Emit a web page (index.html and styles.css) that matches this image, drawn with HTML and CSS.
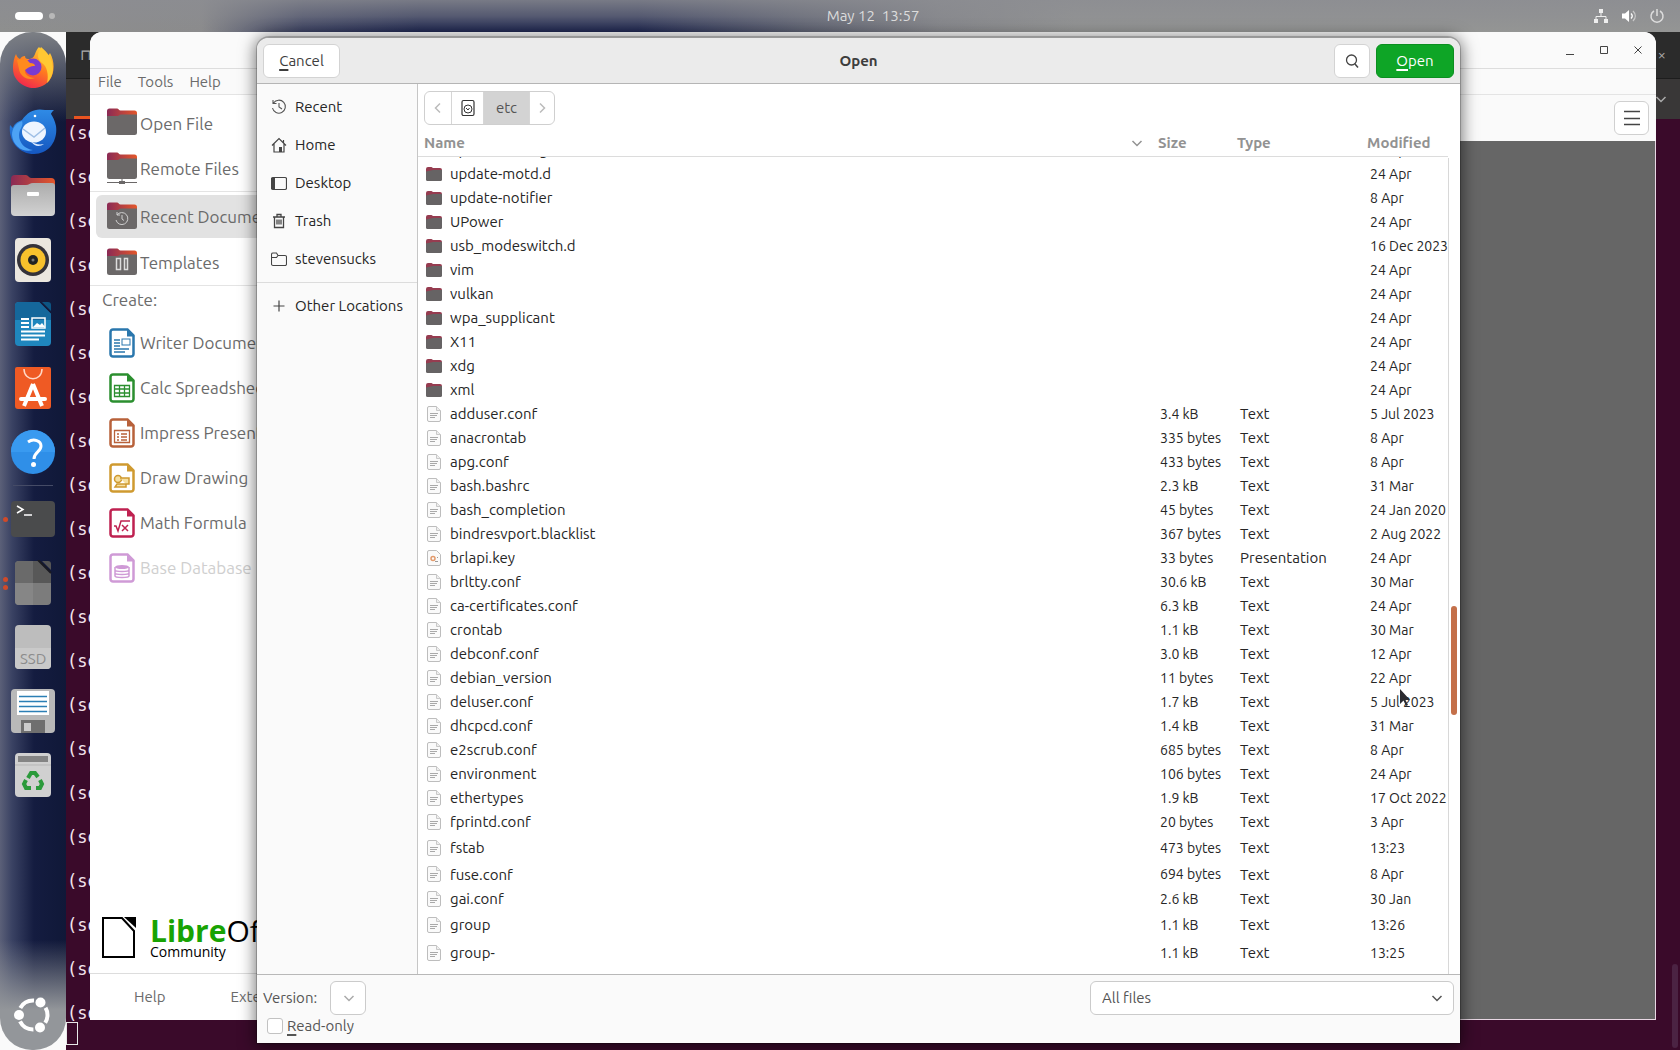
FILE: index.html
```
<!DOCTYPE html>
<html lang="en">
<head>
<meta charset="utf-8">
<title>Open</title>
<link rel="stylesheet" href="styles.css">
</head>
<body>
<svg class="defs" aria-hidden="true">
  <linearGradient id="g-folder" x1="0" x2="1"><stop offset="0" stop-color="#8a2a55"/><stop offset="1" stop-color="#e4572b"/></linearGradient>
  <linearGradient id="g-fox" x1="0.8" y1="0" x2="0.3" y2="1"><stop offset="0" stop-color="#ffd83a"/><stop offset="0.5" stop-color="#ff7a1f"/><stop offset="1" stop-color="#f0254f"/></linearGradient>
  <linearGradient id="g-bird" x1="0" x2="0" y1="0" y2="1"><stop offset="0" stop-color="#2f8be6"/><stop offset="1" stop-color="#1557c0"/></linearGradient>
  <linearGradient id="g-metal" x1="0" x2="0" y1="0" y2="1"><stop offset="0" stop-color="#acacac"/><stop offset="1" stop-color="#d2d2d2"/></linearGradient>
  <symbol id="i-folder" viewBox="0 0 16 16"><path d="M0 3a2 2 0 0 1 2-2h3.500l1.500 1h7a2 2 0 0 1 2 2v4H0z" fill="#963c50"/><path d="M0 5.500l7-1.500h9v9.500a1.500 1.500 0 0 1-1.500 1.500h-13A1.500 1.500 0 0 1 0 13.500z" fill="#666364"/></symbol>
  <symbol id="i-text" viewBox="0 0 16 16"><path d="M3 .5h7.500l4 4V14a1.500 1.500 0 0 1-1.500 1.500H3A1.500 1.500 0 0 1 1.500 14V2A1.500 1.500 0 0 1 3 .5z" fill="#fafafa" stroke="#bdbdbd"/><path d="M10.500 .5v4h4" fill="#eee" stroke="#c9c9c9"/><path d="M4 7.500h8M4 9.500h7M4 11.500h5" stroke="#a9a9a9" fill="none"/></symbol>
  <symbol id="i-pres" viewBox="0 0 16 16"><path d="M3 .5h7.500l4 4V14a1.500 1.500 0 0 1-1.500 1.500H3A1.500 1.500 0 0 1 1.500 14V2A1.500 1.500 0 0 1 3 .5z" fill="#fafafa" stroke="#bdbdbd"/><circle cx="7" cy="8.500" r="2" fill="none" stroke="#e39b6c" stroke-width="1.500"/><path d="M9 11.500h3M11 7l1 1" stroke="#9a9a9a"/></symbol>
  <symbol id="i-big-folder" viewBox="0 0 30 27"><path d="M0 3a2.500 2.500 0 0 1 2.500-2.500h7.500c1.500 0 2 2 3.500 2h14A2.500 2.500 0 0 1 30 5v7H0z" fill="url(#g-folder)"/><path d="M0 8h10.500c1.500 0 2-1.500 3.500-1.500h16v18a2.500 2.500 0 0 1-2.500 2.500h-25A2.500 2.500 0 0 1 0 24.500z" fill="#6b6868"/></symbol>
  <symbol id="i-page" viewBox="0 0 26 30"><path d="M4 1.500h14.500l6 6V26a2.500 2.500 0 0 1-2.500 2.500H4A2.500 2.500 0 0 1 1.500 26V4A2.500 2.500 0 0 1 4 1.500z" fill="#fff" stroke="currentColor" stroke-width="2.500"/><path d="M18 1l7.500 7.500H18z" fill="currentColor"/></symbol>
  <symbol id="i-down" viewBox="0 0 16 16"><path d="M3.500 6l4.500 4.500L12.500 6" fill="none" stroke="currentColor" stroke-width="1.500"/></symbol>
</svg>

<header class="topbar">
  <div class="workspaces"><i></i><b></b></div>
  <time class="clock">May 12&nbsp; 13:57</time>
  <div class="status">
    <svg width="16" height="16" viewBox="0 0 16 16"><path d="M6 1h4v4H6zM1 11h4v4H1zM11 11h4v4h-4z" fill="#eee"/><path d="M8 5v4M3 11V8.500h10V11" fill="none" stroke="#eee"/></svg>
    <svg width="16" height="16" viewBox="0 0 16 16"><path d="M1 5.500h3L8 2v12L4 10.500H1z" fill="#fff"/><path d="M10 5.500c1.500 1.500 1.500 3.500 0 5" fill="none" stroke="#fff" stroke-width="1.300"/><path d="M12 3c3 3 3 7 0 10" fill="none" stroke="#c8c8c8" stroke-width="1.300"/></svg>
    <svg width="16" height="16" viewBox="0 0 16 16"><path d="M5 3a6 6 0 1 0 6 0M8 1v7" fill="none" stroke="#ddd" stroke-width="1.500"/></svg>
  </div>
</header>

<main class="desktop">
  <section class="window terminal">
    <div class="term-title"><span class="term-new">⊓</span><span class="term-close">×</span></div>
    <div class="term-tabs"><span class="term-tab"></span><svg width="16" height="16"><use href="#i-down"/></svg></div>
    <pre class="term-text">(so
(so
(so
(so
(so
(so
(so
(so
(so
(so
(so
(so
(so
(so
(so
(so
(so
(so
(so
(so
(so</pre>
    <div class="term-cursor"></div>
    <div class="term-scroll"></div>
  </section>

  <nav class="dock" aria-label="Dock">
    <button aria-label="Firefox"><svg width="44" height="44" viewBox="0 0 44 44"><path d="M28 1c4 4 5 8 5 11 3-1 5-3 6-5 5 9 5 20-1 28a21 21 0 0 1-35-6C1 23 2 14 5 8c1 3 2 4 4 5 1-2 3-3 5-3 0 2 1 3 3 3 4 0 6-2 7-5 1-3 2-5 4-7z" fill="url(#g-fox)"/><path d="M30 1c7 6 12 12 12 22 0 6-3 11-6 14 2-8 0-17-5-20-4-3-6-8-1-16z" fill="#ffc833"/><circle cx="22" cy="21" r="8.500" fill="#7a3bd0"/><path d="M6 14c5-2 10-1 13 3 3 0 5 1 5 3-5 0-7 2-10 4-1 4 4 8 10 8-8 3-15-2-16-9z" fill="#ff8a1e"/></svg></button>
    <button aria-label="Thunderbird"><svg width="48" height="48" viewBox="0 0 48 48"><path d="M1 17l3 3c1-4 4-6 9-8C19 3 27 0 36 2h9c-2 2-3 3-3 4 2 3 4 7 5 12 2 15-7 28-22 28C10 46-1 33 1 17z" fill="url(#g-bird)"/><path d="M13 13c2 5-3 8-3 14 0 8 6 14 14 15-9 3-20-3-21-15 0-7 4-12 10-14z" fill="#4da3f5"/><ellipse cx="25" cy="24" rx="12" ry="10.500" fill="#eef5ff"/><path d="M14 21l11 8 11-9" fill="none" stroke="#9fbfe6" stroke-width="1.500"/><path d="M22 33c3 3 8 4 13 3-4 3-10 3-13-3z" fill="#dceaff"/><circle cx="26" cy="8" r="1.300" fill="#fff"/></svg></button>
    <button aria-label="Files"><svg width="46" height="42" viewBox="0 0 46 42"><path d="M1 4a4 4 0 0 1 4-4h11c2 0 3 3 5 3h20a4 4 0 0 1 4 4v12H1z" fill="url(#g-folder)"/><path d="M1 13c0-2 1-3 3-3h12c3 0 4-2 7-2h19a3 3 0 0 1 3 3v26a4 4 0 0 1-4 4H5a4 4 0 0 1-4-4z" fill="url(#g-metal)"/><rect x="17" y="17" width="12" height="4" rx="1" fill="#fff"/></svg></button>
    <button aria-label="Rhythmbox"><svg width="38" height="46" viewBox="0 0 38 46"><rect x="1" y="1" width="36" height="44" rx="4" fill="#ebe7df"/><circle cx="19" cy="23" r="16" fill="#35333a"/><circle cx="19" cy="23" r="12.500" fill="#f8c12c"/><circle cx="19" cy="23" r="5" fill="#222"/><circle cx="19" cy="23" r="1.500" fill="#777"/></svg></button>
    <button aria-label="LibreOffice Writer"><svg width="38" height="46" viewBox="0 0 38 46"><path d="M5 1h20l12 12v28a4 4 0 0 1-4 4H5a4 4 0 0 1-4-4V5a4 4 0 0 1 4-4z" fill="#1f86bd"/><path d="M1 19h36v-6L25 1H5a4 4 0 0 0-4 4z" fill="#15679b"/><path d="M28 1h6a3 3 0 0 1 3 3v6z" fill="#0d5482"/><path d="M7 18h8M7 22h8M7 26h8M7 30.500h24M7 34.500h24M7 38.500h18" stroke="#fff" stroke-width="2"/><rect x="18" y="17" width="13" height="10" fill="none" stroke="#fff" stroke-width="1.500"/><path d="M19 26l4-4 3 2 2-2 3 4z" fill="#fff"/></svg></button>
    <button aria-label="App Center"><svg width="38" height="44" viewBox="0 0 38 44"><path d="M3 1h32a2 2 0 0 1 2 2v37a3 3 0 0 1-3 3H4a3 3 0 0 1-3-3V3a2 2 0 0 1 2-2z" fill="#ef5a24"/><path d="M10 3c0 13 18 13 18 0" fill="none" stroke="#ffd9c8" stroke-width="1.500"/><path d="M19 18L10 40M19 18l9 22" stroke="#fff" stroke-width="4" fill="none"/><path d="M7 33h24" stroke="#fff" stroke-width="4" stroke-linecap="round"/></svg></button>
    <button aria-label="Help"><svg width="44" height="44" viewBox="0 0 44 44"><circle cx="22" cy="22" r="22" fill="#2f8fe8"/><path d="M0 22a22 22 0 0 1 44 0z" fill="#399af0"/><path d="M17 12c6-4 13-1 13 4 0 6-7 6-7 13" fill="none" stroke="#fff" stroke-width="3"/><circle cx="22.500" cy="34.500" r="2.500" fill="#fff"/></svg></button>
    <hr>
    <button class="run one" aria-label="Terminal"><svg width="44" height="36" viewBox="0 0 44 36"><rect width="44" height="36" rx="4" fill="#4a4b4c"/><path d="M6 5l6 3.500-6 3.500M13 14h8" fill="none" stroke="#fff" stroke-width="1.500"/></svg></button>
    <button class="run two" aria-label="LibreOffice"><svg width="38" height="46" viewBox="0 0 38 46"><path d="M5 1h20l12 12v28a4 4 0 0 1-4 4H5a4 4 0 0 1-4-4V5a4 4 0 0 1 4-4z" fill="#7c7c7c"/><path d="M1 23h18V1H5a4 4 0 0 0-4 4z" fill="#6a6a6a"/><path d="M19 23V1h6l12 12v10z" fill="#585858"/><path d="M19 23H1v18a4 4 0 0 0 4 4h14z" fill="#868686"/><path d="M28 1h6a3 3 0 0 1 3 3v6z" fill="#555"/><path d="M24 0l13 13" stroke="#1a1a22" stroke-width="2"/></svg></button>
    <button aria-label="SSD"><svg width="38" height="46" viewBox="0 0 38 46"><rect x="1" y="1" width="36" height="44" rx="4" fill="#bdbdbd"/><path d="M1 24h36v17a4 4 0 0 1-4 4H5a4 4 0 0 1-4-4z" fill="#c9c9c9"/><text x="6" y="40" class="ssd">SSD</text></svg></button>
    <button aria-label="Save"><svg width="46" height="46" viewBox="0 0 46 46"><rect x="1" y="1" width="44" height="44" rx="4" fill="#b9b9b9"/><rect x="7" y="3" width="32" height="24" fill="#fff"/><path d="M9 8.500h28M9 13.500h28M9 18.500h28M9 23.500h28" stroke="#2c7fb5" stroke-width="1.300"/><rect x="11" y="32" width="24" height="13" fill="#6f6f6f"/><rect x="14" y="35" width="7" height="8" fill="#ccc"/></svg></button>
    <button aria-label="Trash"><svg width="38" height="46" viewBox="0 0 38 46"><rect x="1" y="1" width="36" height="44" rx="4" fill="#d0d0d0"/><path d="M4 4h30v6H4z" fill="#848484"/><path d="M1 13h36" stroke="#b5b5b5"/><g fill="none" stroke="#2b9a3b" stroke-width="4"><path d="M14 26l3-5h4l3 4"/><path d="M26 28l2 4-2 4h-4"/><path d="M17 36h-5l-2-4 2-4"/></g></svg></button>
    <button class="apps" aria-label="Show Apps"><svg width="40" height="40" viewBox="0 0 40 40"><circle cx="20" cy="20" r="14.500" fill="none" stroke="#fff" stroke-width="4" stroke-dasharray="16.370 14" stroke-dashoffset="8.180"/><circle cx="6" cy="20" r="5" fill="#fff"/><circle cx="27.500" cy="7.500" r="5" fill="#fff"/><circle cx="27" cy="32.500" r="5" fill="#fff"/></svg></button>
  </nav>

  <section class="window office">
    <div class="office-title">
      <button aria-label="Minimize"><svg width="10" height="10"><path d="M1 9.500h8" stroke="#444"/></svg></button>
      <button aria-label="Maximize"><svg width="10" height="10"><path d="M1.500 1.500h7v7h-7z" stroke="#444" fill="none"/></svg></button>
      <button aria-label="Close"><svg width="10" height="10"><path d="M1.500 1.500l7 7M8.500 1.500l-7 7" stroke="#444"/></svg></button>
    </div>
    <nav class="menubar"><a href="#">File</a><a href="#">Tools</a><a href="#">Help</a></nav>
    <div class="office-body">
      <aside class="start">
        <button class="big"><svg width="30" height="34" viewBox="0 0 30 34"><use href="#i-big-folder" width="30" height="27" y="1"/></svg>Open File</button>
        <button class="big"><svg width="30" height="34" viewBox="0 0 30 34"><use href="#i-big-folder" width="30" height="27"/><path d="M0 30.500h30M15 27v4" stroke="#6b6868"/><rect x="12" y="29" width="6" height="3" fill="#6b6868"/></svg>Remote Files</button>
        <hr>
        <button class="big current"><svg width="30" height="34" viewBox="0 0 30 34"><use href="#i-big-folder" width="30" height="27" y="2"/><path d="M10 15a6 6 0 1 1-1 5M15 15v4l2 1.500M10 12v3h3" fill="none" stroke="#cfcfcf"/></svg>Recent Documents</button>
        <button class="big"><svg width="30" height="34" viewBox="0 0 30 34"><use href="#i-big-folder" width="30" height="27" y="2"/><path d="M9.500 12.500h4v11h-4zM17.500 12.500h3v11h-3z" fill="none" stroke="#ddd" stroke-width="1.500"/></svg>Templates</button>
        <hr>
        <h2>Create:</h2>
        <button class="big writer"><svg width="30" height="30" viewBox="0 0 30 30"><use href="#i-page" x="2" width="26" height="30"/><path d="M7 12h6M7 15h6M7 18h6M7 21h15M7 24h11" stroke="currentColor" stroke-width="1.300"/><rect x="15" y="11" width="8" height="6" fill="none" stroke="currentColor"/></svg>Writer Document</button>
        <button class="big calc"><svg width="30" height="30" viewBox="0 0 30 30"><use href="#i-page" x="2" width="26" height="30"/><path d="M7.500 12.500h15v11h-15zM7.500 16h15M7.500 20h15M12.500 12.500v11M17.500 12.500v11" fill="none" stroke="currentColor" stroke-width="1.300"/></svg>Calc Spreadsheet</button>
        <button class="big impress"><svg width="30" height="30" viewBox="0 0 30 30"><use href="#i-page" x="2" width="26" height="30"/><path d="M7.500 12.500h15v12h-15zM10 16h2M10 19h2M10 22h2M14 16h6M14 19h6M14 22h6" fill="none" stroke="currentColor" stroke-width="1.300"/></svg>Impress Presentation</button>
        <button class="big draw"><svg width="30" height="30" viewBox="0 0 30 30"><use href="#i-page" x="2" width="26" height="30"/><circle cx="11" cy="16" r="3.500" fill="#f5dfa0" stroke="currentColor" stroke-width="1.500"/><path d="M13 15h9v6H10l-2 3h11v-3" fill="#f5dfa0" stroke="currentColor" stroke-width="1.500"/></svg>Draw Drawing</button>
        <button class="big math"><svg width="30" height="30" viewBox="0 0 30 30"><use href="#i-page" x="2" width="26" height="30"/><path d="M7 18h2l2 5 3-10h9M15 17l6 6M21 17l-6 6" fill="none" stroke="currentColor" stroke-width="1.500"/></svg>Math Formula</button>
        <button class="big base" disabled><svg width="30" height="30" viewBox="0 0 30 30"><use href="#i-page" x="2" width="26" height="30"/><path d="M8 14v9c0 2 14 2 14 0v-9M8 17c0 2 14 2 14 0M8 20c0 2 14 2 14 0" fill="none" stroke="currentColor" stroke-width="1.500"/><ellipse cx="15" cy="14" rx="7" ry="2" fill="currentColor"/></svg>Base Database</button>
        <div class="brand">
          <svg width="34" height="42" viewBox="0 0 34 42"><path d="M1 1h19l12 13v26H1z" fill="#fff" stroke="#000" stroke-width="2"/><path d="M22 0h12v11z" fill="#000"/></svg>
          <p class="brand-name"><span><b>Libre</b>Office</span><small>Community</small></p>
        </div>
        <footer><a href="#">Help</a><a href="#">Extensions</a></footer>
      </aside>
      <div class="recent">
        <div class="recent-bar"><button aria-label="Menu"><svg width="16" height="16"><path d="M0 1.500h16M0 8.500h16M0 14.500h16" stroke="#444" stroke-width="1.500"/></svg></button></div>
        <div class="recent-view"></div>
      </div>
    </div>
  </section>

  <section class="window dialog" role="dialog" aria-label="Open">
    <header class="dlg-head">
      <button class="btn cancel"><u>C</u>ancel</button>
      <h1>Open</h1>
      <div class="dlg-actions">
        <button class="btn search" aria-label="Search"><svg width="16" height="16"><circle cx="7.500" cy="7" r="5" fill="none" stroke="#444" stroke-width="1.300"/><path d="M11 11l3 3.500" stroke="#444" stroke-width="1.500"/></svg></button>
        <button class="btn open"><u>O</u>pen</button>
      </div>
    </header>
    <div class="dlg-main">
      <nav class="places">
        <a href="#"><svg width="16" height="16" viewBox="0 0 16 16"><path d="M2.500 4A6.500 6.500 0 1 1 1.500 9M8 4v4l3 2M2 1v3.500h3.500" fill="none" stroke="#555" stroke-width="1.100"/></svg>Recent</a>
        <a href="#"><svg width="16" height="16" viewBox="0 0 16 16"><path d="M1 8.500L8 1.500l7 7M3 7v8h10V7M12.500 6V3" fill="none" stroke="#444" stroke-width="1.200"/><path d="M8 10h3v5H8z" fill="#444"/></svg>Home</a>
        <a href="#"><svg width="16" height="16" viewBox="0 0 16 16"><rect x=".5" y="2.500" width="15" height="12" rx="1.500" fill="none" stroke="#444" stroke-width="1.200"/><path d="M1 3h3v11H1z" fill="#444"/></svg>Desktop</a>
        <a href="#"><svg width="16" height="16" viewBox="0 0 16 16"><path d="M2 4h12M6 3.500v-2h4v2M3.500 4v10.500h9V4M6 6.500v5M8 6.500v5M10 6.500v5" fill="none" stroke="#444" stroke-width="1.300"/></svg>Trash</a>
        <a href="#"><svg width="16" height="16" viewBox="0 0 16 16"><path d="M.5 3.500A1.500 1.500 0 0 1 2 2h3.500L7 4.500h7A1.500 1.500 0 0 1 15.500 6v7a1.500 1.500 0 0 1-1.500 1.500H2A1.500 1.500 0 0 1 .5 13zM.5 6.500h5L7 4.500" fill="none" stroke="#444" stroke-width="1.100"/></svg>stevensucks</a>
        <hr>
        <a href="#"><svg width="16" height="16" viewBox="0 0 16 16"><path d="M8 2.500v11M2.500 8h11" stroke="#444" stroke-width="1.200"/></svg>Other Locations</a>
      </nav>
      <div class="browser">
        <div class="crumbs">
          <button aria-label="Back"><svg width="16" height="16"><path d="M10 3.500L5.500 8l4.500 4.500" fill="none" stroke="#bbb" stroke-width="1.500"/></svg></button>
          <button aria-label="Computer"><svg width="16" height="18"><rect x="2" y="1.500" width="12" height="15" rx="1.500" fill="none" stroke="#333" stroke-width="1.200"/><circle cx="8" cy="10" r="4" fill="none" stroke="#333"/><path d="M6 9l2 2 1.500-2" fill="none" stroke="#333"/></svg></button>
          <button class="here">etc</button>
          <button aria-label="Forward"><svg width="16" height="16"><path d="M6 3.500L10.500 8 6 12.500" fill="none" stroke="#bbb" stroke-width="1.500"/></svg></button>
        </div>
        <div class="files">
          <table>
            <colgroup><col><col class="c-size"><col class="c-type"><col class="c-mod"></colgroup>
            <thead><tr><th>Name <svg class="sort" width="16" height="16"><use href="#i-down"/></svg></th><th>Size</th><th>Type</th><th>Modified</th></tr></thead>
            <tbody>
              <tr class="cut"><td><div><svg width="16" height="16"><use href="#i-folder"/></svg>update-manager</div></td><td></td><td></td><td><div>24 Apr</div></td></tr>
              <tr><td><svg width="16" height="16"><use href="#i-folder"/></svg>update-motd.d</td><td></td><td></td><td>24 Apr</td></tr>
              <tr><td><svg width="16" height="16"><use href="#i-folder"/></svg>update-notifier</td><td></td><td></td><td>8 Apr</td></tr>
              <tr><td><svg width="16" height="16"><use href="#i-folder"/></svg>UPower</td><td></td><td></td><td>24 Apr</td></tr>
              <tr><td><svg width="16" height="16"><use href="#i-folder"/></svg>usb_modeswitch.d</td><td></td><td></td><td>16 Dec 2023</td></tr>
              <tr><td><svg width="16" height="16"><use href="#i-folder"/></svg>vim</td><td></td><td></td><td>24 Apr</td></tr>
              <tr><td><svg width="16" height="16"><use href="#i-folder"/></svg>vulkan</td><td></td><td></td><td>24 Apr</td></tr>
              <tr><td><svg width="16" height="16"><use href="#i-folder"/></svg>wpa_supplicant</td><td></td><td></td><td>24 Apr</td></tr>
              <tr><td><svg width="16" height="16"><use href="#i-folder"/></svg>X11</td><td></td><td></td><td>24 Apr</td></tr>
              <tr><td><svg width="16" height="16"><use href="#i-folder"/></svg>xdg</td><td></td><td></td><td>24 Apr</td></tr>
              <tr><td><svg width="16" height="16"><use href="#i-folder"/></svg>xml</td><td></td><td></td><td>24 Apr</td></tr>
              <tr><td><svg width="16" height="16"><use href="#i-text"/></svg>adduser.conf</td><td>3.4 kB</td><td>Text</td><td>5 Jul 2023</td></tr>
              <tr><td><svg width="16" height="16"><use href="#i-text"/></svg>anacrontab</td><td>335 bytes</td><td>Text</td><td>8 Apr</td></tr>
              <tr><td><svg width="16" height="16"><use href="#i-text"/></svg>apg.conf</td><td>433 bytes</td><td>Text</td><td>8 Apr</td></tr>
              <tr><td><svg width="16" height="16"><use href="#i-text"/></svg>bash.bashrc</td><td>2.3 kB</td><td>Text</td><td>31 Mar</td></tr>
              <tr><td><svg width="16" height="16"><use href="#i-text"/></svg>bash_completion</td><td>45 bytes</td><td>Text</td><td>24 Jan 2020</td></tr>
              <tr><td><svg width="16" height="16"><use href="#i-text"/></svg>bindresvport.blacklist</td><td>367 bytes</td><td>Text</td><td>2 Aug 2022</td></tr>
              <tr><td><svg width="16" height="16"><use href="#i-pres"/></svg>brlapi.key</td><td>33 bytes</td><td>Presentation</td><td>24 Apr</td></tr>
              <tr><td><svg width="16" height="16"><use href="#i-text"/></svg>brltty.conf</td><td>30.6 kB</td><td>Text</td><td>30 Mar</td></tr>
              <tr><td><svg width="16" height="16"><use href="#i-text"/></svg>ca-certificates.conf</td><td>6.3 kB</td><td>Text</td><td>24 Apr</td></tr>
              <tr><td><svg width="16" height="16"><use href="#i-text"/></svg>crontab</td><td>1.1 kB</td><td>Text</td><td>30 Mar</td></tr>
              <tr><td><svg width="16" height="16"><use href="#i-text"/></svg>debconf.conf</td><td>3.0 kB</td><td>Text</td><td>12 Apr</td></tr>
              <tr><td><svg width="16" height="16"><use href="#i-text"/></svg>debian_version</td><td>11 bytes</td><td>Text</td><td>22 Apr</td></tr>
              <tr><td><svg width="16" height="16"><use href="#i-text"/></svg>deluser.conf</td><td>1.7 kB</td><td>Text</td><td>5 Jul 2023</td></tr>
              <tr><td><svg width="16" height="16"><use href="#i-text"/></svg>dhcpcd.conf</td><td>1.4 kB</td><td>Text</td><td>31 Mar</td></tr>
              <tr><td><svg width="16" height="16"><use href="#i-text"/></svg>e2scrub.conf</td><td>685 bytes</td><td>Text</td><td>8 Apr</td></tr>
              <tr><td><svg width="16" height="16"><use href="#i-text"/></svg>environment</td><td>106 bytes</td><td>Text</td><td>24 Apr</td></tr>
              <tr><td><svg width="16" height="16"><use href="#i-text"/></svg>ethertypes</td><td>1.9 kB</td><td>Text</td><td>17 Oct 2022</td></tr>
              <tr><td><svg width="16" height="16"><use href="#i-text"/></svg>fprintd.conf</td><td>20 bytes</td><td>Text</td><td>3 Apr</td></tr>
              <tr class="tall"><td><svg width="16" height="16"><use href="#i-text"/></svg>fstab</td><td>473 bytes</td><td>Text</td><td>13:23</td></tr>
              <tr class="mid"><td><svg width="16" height="16"><use href="#i-text"/></svg>fuse.conf</td><td>694 bytes</td><td>Text</td><td>8 Apr</td></tr>
              <tr><td><svg width="16" height="16"><use href="#i-text"/></svg>gai.conf</td><td>2.6 kB</td><td>Text</td><td>30 Jan</td></tr>
              <tr class="tall"><td><svg width="16" height="16"><use href="#i-text"/></svg>group</td><td>1.1 kB</td><td>Text</td><td>13:26</td></tr>
              <tr class="tall"><td><svg width="16" height="16"><use href="#i-text"/></svg>group-</td><td>1.1 kB</td><td>Text</td><td>13:25</td></tr>
            </tbody>
          </table>
          <div class="track"><div class="thumb"></div></div>
        </div>
      </div>
    </div>
    <footer class="dlg-foot">
      <div class="version">
        <label for="version">Version:</label>
        <div class="pick small"><select id="version"><option></option></select><svg width="16" height="16"><use href="#i-down"/></svg></div>
        <label class="readonly"><input type="checkbox"><span><u>R</u>ead-only</span></label>
      </div>
      <div class="pick filter"><select aria-label="File type"><option>All files</option></select><svg width="16" height="16"><use href="#i-down"/></svg></div>
    </footer>
  </section>

  <svg class="pointer" width="12" height="18" viewBox="0 0 12 18"><path d="M1 0v15l3.500-3.500L7 17l2-1-2.500-5H11z" fill="#2b2b30"/></svg>
</main>
</body>
</html>
```
FILE: styles.css
```
* { box-sizing: border-box; }
html, body { height: 100%; }
body {
  margin: 0;
  display: flex;
  flex-direction: column;
  overflow: hidden;
  background: #fafafa;
  color: #3d3d3d;
  font: 15px/20px Ubuntu, "Noto Sans", sans-serif;
}
button, select, input { font: inherit; color: inherit; margin: 0; }
button { border: 0; padding: 0; background: none; }
a { color: inherit; text-decoration: none; }
svg { display: block; flex: none; }
h1, h2, p { margin: 0; }
u { text-decoration-thickness: 2px; text-underline-offset: 3px; }
.defs { position: absolute; width: 0; height: 0; }

/* Top panel */
.topbar {
  flex: none;
  height: 32px;
  display: grid;
  grid-template-columns: 1fr auto 1fr;
  align-items: center;
  padding: 0 15px;
  color: #dcdcdc;
  background:
    linear-gradient(180deg, #8c8d92d0 0, #8c8d9280 50%, #8c8d9200 100%),
    linear-gradient(90deg, #8e8f8e 0, #8b8b8c 12%, #3a4060 18%, #1f2750 25%, #1f2750 38%, #5c6070 48%, #85868a 56%, #949594 64%);
}
.workspaces { display: flex; align-items: center; gap: 6px; }
.workspaces i { width: 28px; height: 8px; border-radius: 4px; background: #fff; }
.workspaces b { width: 6px; height: 6px; border-radius: 3px; background: #b8b8b8; }
.clock { padding-left: 66px; }
.status { display: flex; justify-content: flex-end; gap: 12px; }

.desktop { flex: 1; position: relative; min-height: 0; }
.window { position: absolute; overflow: hidden; display: flex; flex-direction: column; }

/* Dock */
.dock {
  position: absolute;
  inset: 0 auto 0 0;
  width: 66px;
  padding: 4px 0 3px;
  display: flex;
  flex-direction: column;
  border-radius: 32px;
  background:
    linear-gradient(180deg, #7d8085 0, #7d808500 90px, #7d808500 calc(100% - 110px), #93969a calc(100% - 40px)),
    linear-gradient(90deg, #5b6078 0, #3a4263 12px, #141c40 34px, #101838 100%);
}
.dock button { height: 64px; display: flex; align-items: center; justify-content: center; position: relative; }
.dock hr { width: 40px; height: 1px; margin: 1px auto; border: 0; background: #454b66; }
.dock .apps { margin-top: auto; }
.run::before { content: ""; position: absolute; left: 3px; width: 5px; height: 5px; border-radius: 3px; background: #cf4a2a; }
.two::before { box-shadow: 0 8px #cf4a2a; top: 26px; }
.ssd { font-size: 15px; fill: #8c8c8c; }

/* Terminal */
.terminal { inset: 0 0 0 66px; background: #3a0a2a; color: #f2e4ec; }
.term-title { height: 47px; display: flex; justify-content: space-between; align-items: center; padding: 0 14px; background: #2b2b2b; border-bottom: 1px solid #1d1d1d; color: #aaa; }
.term-tabs { height: 40px; display: flex; justify-content: flex-end; align-items: center; padding: 0 11px; background: #393737; position: relative; color: #aaa; }
.term-tab { position: absolute; left: 8px; bottom: 0; width: 300px; height: 3px; background: #e95420; }
.term-text { margin: 0; padding: 0 0 0 1px; font: 17px/44px "DejaVu Sans Mono", monospace; margin-top: -8px; }
.term-cursor { width: 12px; height: 23px; border: 1px solid #e8e8e8; margin-top: -13px; flex: none; }
.term-scroll { position: absolute; right: 2px; bottom: 2px; width: 6px; height: 84px; border-radius: 3px; background: #4b2343; }

/* LibreOffice start centre */
.office { inset: 0 24px 30px 90px; background: #fff; border-radius: 12px 12px 0 0; color: #6b6b6b; }
.office-title { height: 37px; flex: none; display: flex; justify-content: flex-end; align-items: center; gap: 24px; padding: 0 13px; background: #fafafa; border-bottom: 1px solid #ddd; }
.menubar { height: 26px; flex: none; display: flex; align-items: center; gap: 16px; padding: 0 8px; background: #fafafa; border-bottom: 1px solid #e4e4e4; }
.office-body { flex: 1; display: flex; min-height: 0; }
.start { width: 330px; display: flex; flex-direction: column; padding-top: 6px; font-size: 17px; }
.start hr { width: 100%; height: 1px; margin: 0; border: 0; background: #e4e4e4; }
.big { height: 45px; display: flex; align-items: center; gap: 3px; padding-left: 11px; margin-left: 6px; text-align: left; white-space: nowrap; flex: none; }
.start .current { background: #e2e2e2; border-radius: 6px; height: 43px; margin-top: 3px; margin-bottom: 2px; }
.start h2 { font: inherit; padding: 2px 12px; margin-bottom: 6px; line-height: 24px; }
.writer svg { color: #2a77ad; } .calc svg { color: #2b8f2f; } .impress svg { color: #b8613a; }
.draw svg { color: #cf9a30; } .math svg { color: #bf2150; } .base svg { color: #cf9ad6; }
.start .base { color: #cfcfcf; }
.brand { margin-top: auto; display: flex; align-items: center; gap: 14px; padding: 0 12px 14px; color: #000; }
.brand-name { font-size: 30px; line-height: 28px; font-family: "Open Sans", sans-serif; }
.brand-name b { color: #18a303; }
.brand-name small { display: block; font-size: 14px; line-height: 14px; }
.start footer { height: 47px; flex: none; display: flex; align-items: center; gap: 65px; padding-left: 44px; border-top: 1px solid #ddd; font-size: 15px; }
.recent { flex: 1; display: flex; flex-direction: column; }
.recent-bar { height: 46px; flex: none; display: flex; justify-content: flex-end; align-items: center; padding: 0 7px; background: #fafafa; }
.recent-bar button { width: 35px; height: 34px; display: grid; place-items: center; border: 1px solid #d0d0d0; border-radius: 6px; background: #fff; }
.recent-view { flex: 1; background: #666; border: solid #e8d8e4; border-width: 0 1px 1px 0; }

/* File chooser */
.dialog { inset: 5px 220px 7px 257px; border-radius: 12px 12px 0 0; background: #fff; border-top: 1px solid #999; box-shadow: 0 2px 16px 2px #0008, 0 0 0 1px #0003; }
.dlg-head { height: 46px; flex: none; display: grid; grid-template-columns: 1fr auto 1fr; align-items: center; padding: 0 6px; background: #ebebeb; border-bottom: 1px solid #b5b5b5; }
.dlg-head h1 { font-size: 15px; line-height: 20px; }
.btn { height: 34px; border: 1px solid #d3d3d3; border-radius: 6px; background: #fff; }
.cancel { width: 77px; }
.search { width: 36px; display: grid; place-items: center; }
.open { width: 78px; background: #0ea526; border-color: #0b8f20; color: #fff; }
.dlg-actions { display: flex; justify-content: flex-end; gap: 6px; }
.dlg-main { flex: 1; display: flex; min-height: 0; color: #262626; }
.places { width: 161px; flex: none; padding-top: 4px; background: #fafafa; border-right: 1px solid #c6c6c6; }
.places a { height: 38px; display: flex; align-items: center; gap: 8px; padding-left: 14px; white-space: nowrap; }
.places hr { height: 1px; border: 0; margin: 4px 0; background: #dcdcdc; }
.browser { flex: 1; min-width: 0; display: flex; flex-direction: column; }
.crumbs { display: flex; align-self: flex-start; margin: 7px 6px 5px; height: 34px; border: 1px solid #cfcfcf; border-radius: 6px; overflow: hidden; flex: none; color: #555; }
.crumbs button { width: 26px; display: grid; place-items: center; }
.crumbs button + button { width: 32px; border-left: 1px solid #d6d6d6; }
.crumbs button:last-child { width: 25px; }
.crumbs button.here { width: 46px; background: #d3d3d3; }
.files { flex: 1; display: flex; min-height: 0; overflow: hidden; align-items: stretch; }
table { flex: 1; align-self: flex-start; table-layout: fixed; border-collapse: collapse; }
.c-size { width: 80px; } .c-type { width: 130px; } .c-mod { width: 79px; }
th { height: 26px; padding: 0; text-align: left; color: #929292; border-bottom: 1px solid #dcdcdc; position: relative; }
th:first-child { padding-left: 6px; }
th:nth-child(2) { padding-left: 1px; }
.sort { position: absolute; right: 12px; top: 5px; }
td { height: 24px; padding: 0 0 0 3px; line-height: 24px; white-space: nowrap; overflow: hidden; }
td:first-child { padding-left: 8px; }
td:nth-child(2), td:nth-child(4) { font-size: 14px; }
td svg { float: left; margin: 4px 8px 0 0; }
.mid td { height: 25px; line-height: 25px; }
.tall td { height: 28px; line-height: 28px; }
.tall svg { margin-top: 6px; }
.cut td { height: 5px; line-height: 5px; }
.cut div { height: 5px; overflow: hidden; display: flex; align-items: flex-end; line-height: 24px; }
.cut svg { margin: 0 8px 4px 0; }
.track { width: 12px; flex: none; border-left: 1px solid #d8d8d8; margin-top: 28px; padding: 448px 3px 0 2px; }
.thumb { height: 109px; border-radius: 3px; background: #c4704a; }

.dlg-foot { flex: none; display: flex; justify-content: space-between; align-items: flex-start; padding: 6px 6px 7px; background: #fafafa; border-top: 1px solid #b8b8b8; color: #555; }
.version { display: grid; grid-template-columns: auto auto; column-gap: 13px; row-gap: 1px; align-items: center; }
.pick { position: relative; }
.pick select { width: 100%; height: 34px; padding: 0 11px; border: 1px solid #cbcbcb; border-radius: 6px; background: #fff; appearance: none; }
.pick svg { position: absolute; right: 9px; top: 9px; pointer-events: none; }
.small { width: 36px; color: #aaa; }
.filter { width: 364px; }
.readonly { grid-column: 1 / -1; display: flex; align-items: center; gap: 4px; padding-left: 4px; }
.readonly input { appearance: none; width: 16px; height: 16px; border: 1px solid #c2c2c2; border-radius: 3px; background: #fff; }
.pointer { position: absolute; left: 1399px; top: 657px; }
```
